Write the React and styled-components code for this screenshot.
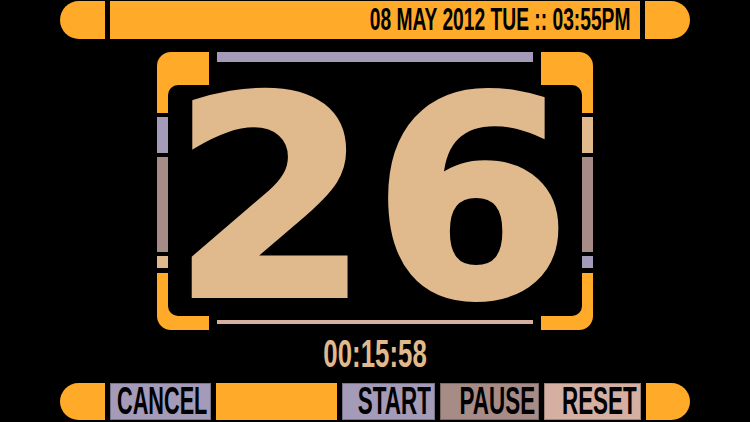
import styled, { createGlobalStyle } from "styled-components";

const ORANGE = "#FFAA28";
const LAVENDER = "#A49BB9";
const MAUVE = "#A68B87";
const TAN = "#E0B98C";
const PINK = "#D5AFA2";

const GlobalStyle = createGlobalStyle`
  html, body {
    margin: 0;
    padding: 0;
    background: #000;
  }
  body {
    font-family: "Liberation Sans", Arial, sans-serif;
  }
`;

const Screen = styled.div`
  width: 750px;
  height: 422px;
  background: #000;
  display: flex;
  flex-flow: column;
  overflow: hidden;
`;

const Bar = styled.div`
  display: flex;
  gap: 5px;
  margin-left: 60px;
  height: ${(props) => props.$h}px;
  margin-top: ${(props) => props.$top}px;
`;

const Cap = styled.div`
  width: ${(props) => props.$w || 45}px;
  flex-shrink: 0;
  background: ${ORANGE};
  border-radius: ${(props) =>
    props.$side === "left" ? "19px 0 0 19px" : "0 19px 19px 0"};
`;

const Filler = styled.div`
  width: ${(props) => props.$w}px;
  flex-shrink: 0;
  background: ${(props) => props.$color || ORANGE};
  display: flex;
  justify-content: flex-end;
  align-items: flex-start;
  padding-right: ${(props) => props.$pad || 0}px;
  box-sizing: border-box;
`;

const Button = styled.button`
  all: unset;
  width: ${(props) => props.$w}px;
  flex-shrink: 0;
  background: ${(props) => props.$color};
  display: flex;
  justify-content: flex-end;
  padding-right: 4px;
  box-sizing: border-box;
  box-shadow: inset 0 0 0 1px rgba(0, 0, 0, 0.25);
  cursor: pointer;
`;

// narrow LCARS type: squeeze a bold face sideways
const Narrow = styled.span`
  display: inline-block;
  flex-shrink: 0;
  white-space: nowrap;
  font-family: "Liberation Sans", Arial, sans-serif;
  font-weight: 700;
  font-size: ${(props) => props.$size}px;
  line-height: ${(props) => props.$lh}px;
  color: ${(props) => props.$color || "#000"};
  transform: scaleX(${(props) => props.$sx});
  transform-origin: ${(props) => props.$origin || "right"} center;
`;

const Frame = styled.div`
  margin: 13px 0 0 157px;
  width: 436px;
  height: 278px;
  display: grid;
  grid-template-columns: 52px 1fr 52px;
  grid-template-rows: 61px 1fr 57px;
`;

const Corner = styled.svg`
  display: block;
  grid-row: ${(props) => props.$row};
  grid-column: ${(props) => props.$col};
`;

const Line = styled.div`
  grid-row: ${(props) => props.$row};
  grid-column: 2;
  align-self: ${(props) => (props.$row === 1 ? "start" : "end")};
  height: ${(props) => props.$h}px;
  margin: ${(props) => (props.$row === 1 ? "0 8px" : "0 8px 6px")};
  background: ${(props) => props.$color};
`;

const Side = styled.div`
  grid-row: 2;
  grid-column: ${(props) => props.$col};
  display: flex;
  flex-flow: column;
  align-items: ${(props) => (props.$col === 1 ? "flex-start" : "flex-end")};
  gap: 4px;
  padding: 4px 0 5px;
`;

const Segment = styled.div`
  width: 11px;
  height: ${(props) => props.$h}px;
  flex-shrink: 0;
  background: ${(props) => props.$color};
`;

const Count = styled.div`
  grid-area: 1 / 1 / -1 / -1;
  align-self: center;
  justify-self: center;
  margin: 18px 6px 0 0;
  height: 220px;
  font-family: "DejaVu Sans", sans-serif;
  font-weight: 700;
  font-size: 278px;
  line-height: 220px;
  letter-spacing: 2px;
  color: ${TAN};
  -webkit-text-stroke: 4px ${TAN};
  transform: scaleX(1.03);
  z-index: 1;
  white-space: nowrap;
`;

const Timer = styled.div`
  margin-top: 5px;
  height: 38px;
  display: flex;
  justify-content: center;
`;

const leftSegs = [
  { h: 36, c: LAVENDER },
  { h: 95, c: MAUVE },
  { h: 12, c: TAN },
];
const rightSegs = [
  { h: 36, c: TAN },
  { h: 95, c: MAUVE },
  { h: 12, c: LAVENDER },
];

const buttons = [
  { label: "START", w: 93, c: LAVENDER },
  { label: "PAUSE", w: 99, c: MAUVE },
  { label: "RESET", w: 97, c: PINK },
];

const App = () => {
  return (
    <>
      <GlobalStyle />
      <Screen>
        <Bar $h={38} $top={1}>
          <Cap $side="left" />
          <Filler $w={530} $pad={10}>
            <Narrow $size={31} $lh={38} $sx={0.62}>
              08 MAY 2012 TUE :: 03:55PM
            </Narrow>
          </Filler>
          <Cap $side="right" />
        </Bar>

        <Frame>
          <Corner $row={1} $col={1} width="52" height="61" viewBox="0 0 52 61">
            <path
              d="M14 0H52V33H21A10 10 0 0 0 11 43V61H0V14A14 14 0 0 1 14 0Z"
              fill={ORANGE}
            />
          </Corner>
          <Line $row={1} $h={10} $color={LAVENDER} />
          <Corner $row={1} $col={3} width="52" height="61" viewBox="0 0 52 61">
            <path
              d="M0 0H38A14 14 0 0 1 52 14V61H41V43A10 10 0 0 0 31 33H0Z"
              fill={ORANGE}
            />
          </Corner>

          <Side $col={1}>
            {leftSegs.map((s, i) => (
              <Segment key={i} $h={s.h} $color={s.c} />
            ))}
          </Side>
          <Side $col={3}>
            {rightSegs.map((s, i) => (
              <Segment key={i} $h={s.h} $color={s.c} />
            ))}
          </Side>

          <Corner $row={3} $col={1} width="52" height="57" viewBox="0 0 52 57">
            <path
              d="M0 0H11V33A10 10 0 0 0 21 43H52V57H14A14 14 0 0 1 0 43Z"
              fill={ORANGE}
            />
          </Corner>
          <Line $row={3} $h={4} $color={PINK} />
          <Corner $row={3} $col={3} width="52" height="57" viewBox="0 0 52 57">
            <path
              d="M41 0H52V43A14 14 0 0 1 38 57H0V43H31A10 10 0 0 0 41 33Z"
              fill={ORANGE}
            />
          </Corner>

          <Count>26</Count>
        </Frame>

        <Timer>
          <Narrow $size={38} $lh={38} $sx={0.68} $origin="center" $color={TAN}>
            00:15:58
          </Narrow>
        </Timer>

        <Bar $h={37} $top={10}>
          <Cap $side="left" />
          <Button $w={101} $color={LAVENDER}>
            <Narrow $size={38} $lh={37} $sx={0.57}>
              CANCEL
            </Narrow>
          </Button>
          <Filler $w={121} />
          {buttons.map((b) => (
            <Button key={b.label} $w={b.w} $color={b.c}>
              <Narrow $size={38} $lh={37} $sx={0.59}>
                {b.label}
              </Narrow>
            </Button>
          ))}
          <Cap $side="right" $w={44} />
        </Bar>
      </Screen>
    </>
  );
};

export default App;
